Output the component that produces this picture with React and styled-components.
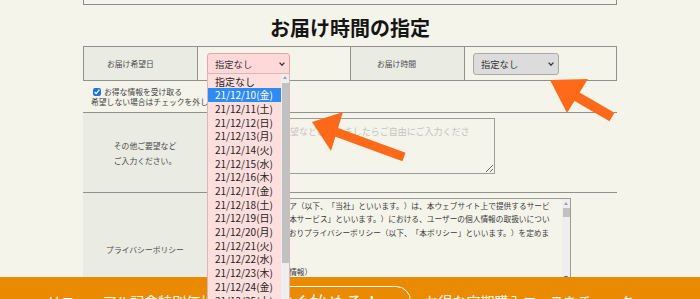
import styled, { createGlobalStyle } from "styled-components";

const GlobalStyle = createGlobalStyle`
  html, body {
    margin: 0;
    padding: 0;
    background: #f5f4ea;
    overflow: hidden;
  }
  body {
    font-family: "Noto Sans CJK JP", "Noto Sans", sans-serif;
    color: #333;
    text-spacing-trim: space-all;
  }
`;

const weekdays = ["日", "月", "火", "水", "木", "金", "土"];

const dateOptions = Array.from({ length: 22 }, (_, i) => {
  const d = new Date(2021, 11, 10 + i);
  const dd = String(d.getDate()).padStart(2, "0");
  return `21/12/${dd}(${weekdays[d.getDay()]})`;
});

const privacyText =
  "株式会社ルミア（以下、「当社」といいます。）は、本ウェブサイト上で提供するサービス（以下、「本サービス」といいます。）における、ユーザーの個人情報の取扱いについて、以下のとおりプライバシーポリシー（以下、「本ポリシー」といいます。）を定めます。\n\n第１条（個人情報）\n「個人情報」とは、個人情報保護法にいう「個人情報」を指すものとします。";

const Page = styled.div`
  width: 534px;
  margin: 0 auto;
`;

const TopBox = styled.div`
  height: 4px;
  border: 1px solid #8c8c86;
  border-top: none;
`;

const Title = styled.h2`
  margin: 0;
  padding-top: 5px;
  height: 36px;
  line-height: 36px;
  text-align: center;
  font-size: 20px;
  font-weight: 700;
  color: #151515;
`;

const TimeTable = styled.div`
  display: grid;
  grid-template-columns: 114px 153px 114px 151px;
  height: 35px;
  box-sizing: border-box;
  border: 1px solid #92928c;
`;

const LabelCell = styled.div`
  display: flex;
  align-items: center;
  padding-left: ${({ $pad }) => $pad}px;
  background: #eaebe3;
  border-right: 1px solid #92928c;
  font-size: 7.8px;
  color: #4a4a4a;
`;

const ValueCell = styled.div`
  display: flex;
  align-items: center;
  padding-left: ${({ $pad }) => $pad}px;
  border-right: ${({ $last }) => ($last ? "none" : "1px solid #92928c")};
`;

const SelectWrap = styled.div`
  position: relative;
`;

const SelectBox = styled.div`
  display: flex;
  align-items: center;
  justify-content: space-between;
  box-sizing: border-box;
  width: ${({ $w }) => $w}px;
  height: 22px;
  padding: 0 4px 0 7px;
  border: 1px solid ${({ $pink }) => ($pink ? "#e2a9a9" : "#a9a9a6")};
  border-radius: 3px;
  background: ${({ $pink }) => ($pink ? "#ffd9d9" : "#dcdcdc")};
  font-size: 9.3px;
  color: #333;
`;

const DropList = styled.div`
  position: absolute;
  top: 20px;
  left: 0;
  z-index: 20;
  display: flex;
  width: 83px;
  height: 240px;
  box-sizing: border-box;
  border: 1px solid #dcb6b6;
  background: #ffdede;
  overflow: hidden;
`;

const OptionCol = styled.div`
  flex: 1;
  padding-top: 1px;
`;

const Option = styled.div`
  height: 13.7px;
  line-height: 13.7px;
  padding-left: 7px;
  font-size: 10px;
  color: ${({ $active }) => ($active ? "#fff" : "#222")};
  background: ${({ $active }) => ($active ? "#2f8bf3" : "transparent")};
  white-space: nowrap;
`;

const ScrollTrack = styled.div`
  display: flex;
  flex-direction: column;
  width: 8px;
  flex-shrink: 0;
  background: #eeeeee;
`;

const ScrollArrow = styled.div`
  height: 8px;
  display: flex;
  align-items: center;
  justify-content: center;

  &::after {
    content: "";
    border-left: 2.5px solid transparent;
    border-right: 2.5px solid transparent;
    ${({ $down }) =>
      $down ? "border-top: 3px solid #606060;" : "border-bottom: 3px solid #a0a0a0;"}
  }
`;

const ScrollThumb = styled.div`
  height: ${({ $h }) => $h}px;
  margin: 1px 0.5px 0;
  background: #c1c1c1;
`;

const Spacer = styled.div`
  flex: 1;
`;

const OptIn = styled.div`
  height: 31px;
  box-sizing: border-box;
  padding: 6px 8px 0;
  font-size: 7.8px;
  line-height: 10px;
  color: #444;
`;

const OptLine = styled.label`
  display: flex;
  align-items: center;
  gap: 3px;
  padding-left: 2px;

  input {
    width: 8px;
    height: 8px;
    margin: 0;
    accent-color: #1a73e8;
  }
`;

const FormRow = styled.div`
  display: grid;
  grid-template-columns: 124px 1fr;
  min-height: ${({ $h }) => $h}px;
  border-top: 1px solid #92928c;
`;

const RowLabel = styled.div`
  display: flex;
  align-items: center;
  justify-content: center;
  text-align: center;
  background: #eaebe3;
  font-size: 7.8px;
  line-height: 15px;
  color: #4a4a4a;
`;

const RowValue = styled.div`
  padding: 5px 0 0 33px;
`;

const RequestArea = styled.textarea`
  display: block;
  box-sizing: border-box;
  width: 255px;
  height: 56px;
  margin: 0;
  padding: 6px 22px 4px 4px;
  border: 1px solid #9d9d97;
  background: transparent;
  font-family: inherit;
  font-size: 9px;
  line-height: 13px;
  text-spacing-trim: space-all;

  &::placeholder {
    color: #c4c4c0;
  }
`;

const PolicyBox = styled.div`
  display: flex;
  width: 331px;
  height: 84px;
  box-sizing: border-box;
  border: 1px solid #9d9d97;
`;

const PolicyText = styled.textarea`
  flex: 1;
  margin: 0;
  padding: 0 8px 0 2px;
  border: none;
  outline: none;
  resize: none;
  overflow: hidden;
  background: transparent;
  font-family: inherit;
  font-size: 7.7px;
  line-height: 13.3px;
  color: #3a3a3a;
  text-spacing-trim: space-all;
`;

const CtaBar = styled.div`
  position: fixed;
  left: 0;
  right: 0;
  top: 277px;
  height: 48px;
  z-index: 10;
  display: flex;
  align-items: center;
  padding-left: 47px;
  background: #ea8a00;
  color: #fff;
  font-size: 14px;
  white-space: nowrap;
`;

const CtaButton = styled.div`
  display: flex;
  align-items: center;
  height: 30px;
  box-sizing: border-box;
  margin: 0 13px 0 30px;
  padding: 0 30px 0 12px;
  border: 1.5px solid #fff;
  border-radius: 16px;
  font-size: 17.6px;
`;

const ArrowLayer = styled.svg`
  position: fixed;
  left: 0;
  top: 0;
  z-index: 30;
  pointer-events: none;
`;

function Chevron() {
  return (
    <svg width="6" height="4" viewBox="0 0 6 4">
      <polyline points="0.6,0.6 3,3.2 5.4,0.6" fill="none" stroke="#333" strokeWidth="1.3" />
    </svg>
  );
}

function Scrollbar({ thumb, down }) {
  return (
    <ScrollTrack>
      <ScrollArrow />
      <ScrollThumb $h={thumb} />
      <Spacer />
      {down && <ScrollArrow $down />}
    </ScrollTrack>
  );
}

export default function App() {
  return (
    <>
      <GlobalStyle />
      <Page>
        <TopBox />
        <Title>お届け時間の指定</Title>
        <TimeTable>
          <LabelCell $pad={23}>お届け希望日</LabelCell>
          <ValueCell $pad={9}>
            <SelectWrap>
              <SelectBox $w={83} $pink>
                指定なし
                <Chevron />
              </SelectBox>
              <DropList>
                <OptionCol>
                  <Option>指定なし</Option>
                  {dateOptions.map((d, i) => (
                    <Option key={d} $active={i === 0}>
                      {d}
                    </Option>
                  ))}
                </OptionCol>
                <Scrollbar thumb={180} />
              </DropList>
            </SelectWrap>
          </ValueCell>
          <LabelCell $pad={26}>お届け時間</LabelCell>
          <ValueCell $pad={8} $last>
            <SelectBox $w={86}>
              指定なし
              <Chevron />
            </SelectBox>
          </ValueCell>
        </TimeTable>

        <OptIn>
          <OptLine>
            <input type="checkbox" defaultChecked />
            お得な情報を受け取る
          </OptLine>
          <div>希望しない場合はチェックを外してください。</div>
        </OptIn>

        <FormRow $h={79}>
          <RowLabel>
            その他ご要望など
            <br />
            ご入力ください。
          </RowLabel>
          <RowValue>
            <RequestArea placeholder="その他ご要望などございましたらご自由にご入力ください。" />
          </RowValue>
        </FormRow>

        <FormRow $h={113}>
          <RowLabel>プライバシーポリシー</RowLabel>
          <RowValue>
            <PolicyBox>
              <PolicyText readOnly value={privacyText} />
              <Scrollbar thumb={9} down />
            </PolicyBox>
          </RowValue>
        </FormRow>
      </Page>

      <CtaBar>
        リニューアル記念特別価格
        <CtaButton>今すぐ始める！</CtaButton>
        お得な定期購入コースをチェック
      </CtaBar>

      <ArrowLayer width="700" height="299" viewBox="0 0 700 299">
        <g fill="#ff6a1a" stroke="#ff6a1a">
          <polygon points="550,80 588,79 567,113" strokeWidth="0" />
          <line x1="574" y1="95" x2="612" y2="117" strokeWidth="10" />
          <polygon points="312,122 343,112 331,151" strokeWidth="0" />
          <line x1="333" y1="131" x2="404" y2="157" strokeWidth="9" />
        </g>
      </ArrowLayer>
    </>
  );
}
